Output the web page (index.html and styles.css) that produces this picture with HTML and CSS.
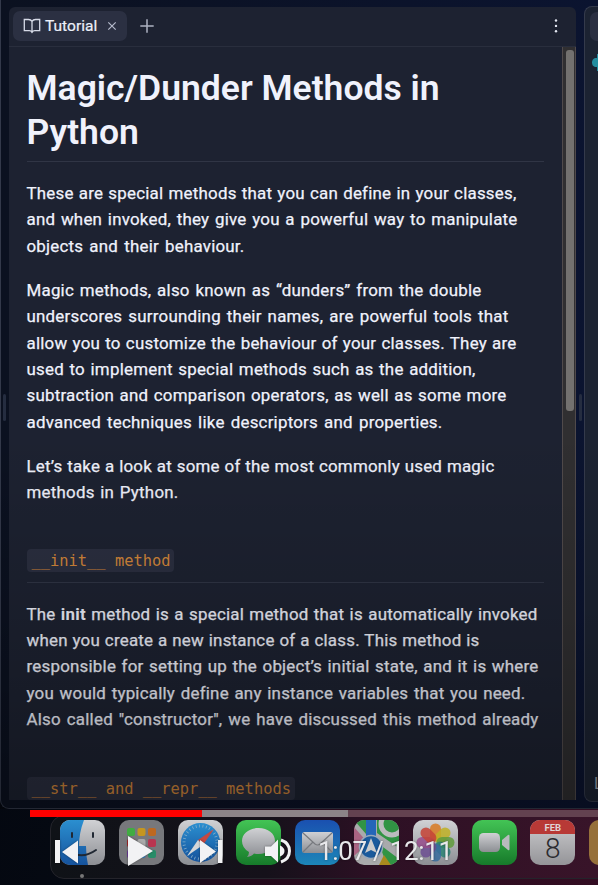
FILE: index.html
```html
<!DOCTYPE html>
<html lang="en">
<head>
<meta charset="utf-8">
<title>Tutorial</title>
<link rel="stylesheet" href="styles.css">
</head>
<body>
<div class="screen">
  <div class="window">
    <i class="grip grip-left"></i>
    <main class="panel">
      <header class="tabs">
        <div class="tab">
          <svg class="book" width="18" height="16" viewBox="0 0 18 16"><path d="M9 3.4C8.2 2 6.8 1.5 5.5 1.5H1.3v11.2h5c1.2 0 2 .4 2.7 1.6.7-1.2 1.500-1.600 2.700-1.600h5V1.500h-4.200C11.200 1.500 9.800 2 9 3.400zV14"/></svg>
          <span>Tutorial</span>
          <svg class="close" width="10" height="10" viewBox="0 0 10 10"><path d="M1.300 1.300l7.400 7.400M8.700 1.300L1.300 8.700"/></svg>
        </div>
        <svg class="plus" width="14" height="14" viewBox="0 0 14 14"><path d="M7 .3v13.400M.3 7h13.400"/></svg>
        <svg class="more" width="4" height="16" viewBox="0 0 4 16"><circle cx="2" cy="2.500" r="1.200"/><circle cx="2" cy="7.900" r="1.200"/><circle cx="2" cy="13.300" r="1.200"/></svg>
      </header>
      <div class="body">
        <article>
          <h1><span class="w412">Magic/Dunder Methods in</span> <span class="w112">Python</span></h1>
          <p><span class="w490">These are special methods that you can define in your classes,</span>
          <span class="w491">and when invoked, they give you a powerful way to manipulate</span>
          <span class="w218">objects and their behaviour.</span></p>
          <p><span class="w455">Magic methods, also known as “dunders” from the double</span>
          <span class="w482">underscores surrounding their names, are powerful tools that</span>
          <span class="w490">allow you to customize the behaviour of your classes. They are</span>
          <span class="w449">used to implement special methods such as the addition,</span>
          <span class="w480">subtraction and comparison operators, as well as some more</span>
          <span class="w416">advanced techniques like descriptors and properties.</span></p>
          <p><span class="w468">Let’s take a look at some of the most commonly used magic</span>
          <span class="w152">methods in Python.</span></p>
          <h2><code>__init__ method</code></h2>
          <p><span class="w511">The <b>init</b> method is a special method that is automatically invoked</span>
          <span class="w453">when you create a new instance of a class. This method is</span>
          <span class="w512">responsible for setting up the object’s initial state, and it is where</span>
          <span class="w499">you would typically define any instance variables that you need.</span>
          <span class="w512">Also called "constructor", we have discussed this method already</span></p>
          <h2 class="last"><code>__str__ and __repr__ methods</code></h2>
        </article>
        <div class="scrollbar"><i></i></div>
      </div>
    </main>
    <i class="grip grip-right"></i>
    <aside class="side">
      <div class="side-tab"></div>
      <svg class="python" width="12" height="17" viewBox="0 0 12 17"><path d="M5 0h7v17H5v-4H3Q0 12 0 8.500T3 4h2z"/></svg>
      <span class="side-label">L</span>
    </aside>
  </div>
  <div class="progress"><i class="played"></i><i class="loaded"></i></div>
  <div class="dock">
    <svg viewBox="0 0 45 45"><defs><linearGradient id="blue" x2="0" y2="1"><stop stop-color="#2b8fd0"/><stop offset="1" stop-color="#15529c"/></linearGradient><linearGradient id="sky" x2="0" y2="1"><stop stop-color="#1a50b0"/><stop offset="1" stop-color="#1c86b8"/></linearGradient><linearGradient id="green" x2="0" y2="1"><stop stop-color="#43c455"/><stop offset="1" stop-color="#167a2a"/></linearGradient><linearGradient id="white" x2="0" y2="1"><stop stop-color="#d0d1d4"/><stop offset="1" stop-color="#8c8e93"/></linearGradient><clipPath id="tile"><rect width="45" height="45" rx="10"/></clipPath></defs>
      <g clip-path="url(#tile)"><path fill="url(#white)" d="M0 0h45v45H0z"/><path fill="url(#blue)" d="M0 0h24q-5 13-5 26h7q0 10 2 19H0z"/><path class="smile" d="M12 13v4M33 13v4M9 31q13 9 27-1"/></g></svg>
    <svg viewBox="0 0 45 45"><rect width="45" height="45" rx="10" fill="#77787c"/><g><rect x="8" y="8" width="8" height="8" rx="2" fill="#40ac42"/><rect x="18.500" y="8" width="8" height="8" rx="2" fill="#c59620"/><rect x="29" y="8" width="8" height="8" rx="2" fill="#bd6820"/><rect x="8" y="19" width="8" height="8" rx="2" fill="#a52525"/><rect x="18.500" y="19" width="8" height="8" rx="2" fill="#aaa"/><rect x="29" y="19" width="8" height="8" rx="2" fill="#b93450"/><rect x="8" y="30" width="8" height="8" rx="2" fill="#6c3a99"/><rect x="18.500" y="30" width="8" height="8" rx="2" fill="#347bb5"/><rect x="29" y="30" width="8" height="8" rx="2" fill="#288c68"/></g></svg>
    <svg viewBox="0 0 45 45"><rect width="45" height="45" rx="10" fill="url(#white)"/><circle cx="22.500" cy="22.500" r="19.500" fill="url(#blue)"/><circle class="ticks" cx="22.500" cy="22.500" r="16.500"/><path fill="#c64842" d="M36 9L25 25l-5-5z"/><path fill="#d5d6d8" d="M9 36l11-16 5 5z"/></svg>
    <svg viewBox="0 0 45 45"><rect width="45" height="45" rx="10" fill="url(#green)"/><path fill="url(#white)" d="M22.500 8C13 8 6 13.500 6 21q0 7 7 11 0 3-2 5 5-1 7-3.500 2 .5 4.500.5C32 34 39 28.500 39 21S32 8 22.500 8z"/></svg>
    <svg viewBox="0 0 45 45"><rect width="45" height="45" rx="10" fill="url(#sky)"/><rect x="7" y="12" width="31" height="21" rx="2.500" fill="url(#white)"/><path class="flap" d="M8 13l12 11q2.500 2 5 0l12-11M8 32l10-10M37 32L27 22"/></svg>
    <svg viewBox="0 0 45 45"><g clip-path="url(#tile)"><path fill="#a9aaac" d="M0 0h45v45H0z"/><path fill="#a96482" d="M0 7l14 16L0 36z"/><path fill="#319444" d="M0 0h12v14zM23 0h22v28L23 13zM25 24l20 15v6H33z"/><path fill="#2466b9" d="M12 0h10v20H12z"/><circle cx="38" cy="4" r="11" fill="none" stroke="#bcbcbe" stroke-width="5"/><path fill="#a98a1e" d="M25 45l5-10 7 10z"/><circle cx="17" cy="27" r="11.500" fill="#1a5a9c" stroke="#98a8ba" stroke-width="1.500"/><path fill="#ccc" d="M17 18l6 15-6-3-6 3z"/></g></svg>
    <svg viewBox="0 0 45 45"><rect width="45" height="45" rx="10" fill="url(#white)"/><g class="petals" transform="translate(22.500 22.500)"><rect x="-5.500" y="-19" width="11" height="18" rx="5.500" fill="#d97c24"/><rect x="-5.500" y="-19" width="11" height="18" rx="5.500" fill="#bfb125" transform="rotate(45)"/><rect x="-5.500" y="-19" width="11" height="18" rx="5.500" fill="#5f9b3b" transform="rotate(90)"/><rect x="-5.500" y="-19" width="11" height="18" rx="5.500" fill="#2c8476" transform="rotate(135)"/><rect x="-5.500" y="-19" width="11" height="18" rx="5.500" fill="#386c9d" transform="rotate(180)"/><rect x="-5.500" y="-19" width="11" height="18" rx="5.500" fill="#6c4f92" transform="rotate(225)"/><rect x="-5.500" y="-19" width="11" height="18" rx="5.500" fill="#964d8c" transform="rotate(270)"/><rect x="-5.500" y="-19" width="11" height="18" rx="5.500" fill="#c54437" transform="rotate(315)"/></g></svg>
    <svg viewBox="0 0 45 45"><rect width="45" height="45" rx="10" fill="url(#green)"/><rect x="7" y="13" width="21" height="19" rx="4.500" fill="url(#white)"/><path fill="#b9bbbd" d="M30 20l6-5q1.500-1 1.500 1v13q0 2-1.500 1l-6-5z"/></svg>
    <div class="calendar"><b>FEB</b><span>8</span></div>
    <div class="notes"></div>
    <i class="running"></i>
    <div class="controls">
      <svg width="27" height="30" viewBox="0 0 27 30"><path d="M1 4h5v23H1zM24 4.500v23L8 16z"/></svg>
      <svg class="play" width="27" height="32" viewBox="0 0 27 32"><path d="M1 1v30l25-15z"/></svg>
      <svg class="next" width="25" height="25" viewBox="0 0 25 25"><path d="M1 1v23l16-11.500zM19 1h4.500v23H19z"/></svg>
      <svg class="volume" width="28" height="28" viewBox="0 0 28 28"><path d="M1 9.500h6l7-7v23l-7-6.500H1zM16 8.500q4.500 2 4.500 5.500T16 19.500z"/><path class="wave" d="M17 3q8.500 3 8.500 11T17 25"/></svg>
      <span class="time">1:07 / 12:11</span>
    </div>
  </div>
  <div class="shade"></div>
</div>
</body>
</html>
```

FILE: styles.css
```css
* { box-sizing: border-box; }
body { margin: 0; font-family: Roboto, "Liberation Sans", sans-serif; }
svg { display: block; flex: none; }
.screen { position: relative; width: 598px; height: 885px; overflow: hidden; background: linear-gradient(100deg, #02060e 0, #060a13 35%, #230a1b 52%, #330d22 100%); }
.window { position: relative; display: flex; height: 809px; padding: 7px 0 8px 9px; background: linear-gradient(90deg, #0b1120, #0b1430); border: solid #33394a; border-width: 0 0 1px 1px; border-radius: 0 0 0 9px; }
.panel { width: 567px; flex: none; margin-left: -1px; background: #1d2231; border-radius: 6px 6px 0 0; }
.tabs { display: flex; align-items: center; height: 40px; padding: 0 18px 1px 4px; border-bottom: 1px solid #292e3d; }
.tab { display: flex; align-items: center; width: 114px; height: 30px; padding-left: 10px; border-radius: 7px; background: #2b3042; color: #edf0fa; font-size: 15.500px; -webkit-text-stroke: .2px; }
.tab span { width: 53px; margin-left: 4px; letter-spacing: .02px; }
.book { fill: none; stroke: #d6dae7; stroke-width: 1.300; }
.close { margin-left: 9px; fill: none; stroke: #b5bacb; stroke-width: 1.200; }
.plus { margin-left: 13px; fill: none; stroke: #adb2c1; stroke-width: 1.500; }
.more { margin-left: auto; fill: #e4e8f2; }
.body { display: flex; height: 753px; }
article { width: 553px; padding: 19px 18px 0 17.500px; overflow: hidden; color: #f0f2fc; }
h1 { height: 96px; margin: 0 0 18px; border-bottom: 1px solid #303545; font-size: 35.500px; line-height: 44px; font-weight: 600; }
h1 span, p span { display: block; white-space: nowrap; text-align-last: justify; }
p { margin: 0 0 17.600px; font-size: 16.900px; line-height: 26.400px; font-weight: 400; letter-spacing: .23px; -webkit-text-stroke: .25px; }
p b { font-weight: 700; -webkit-text-stroke: 0; }
h2 { height: 34px; margin: 43px 0 18px; border-bottom: 1px solid #303545; font-weight: 400; }
h2 code { display: block; width: 147px; height: 23px; padding-left: 5px; border-radius: 4px; background: #2b2f40; color: #d4873a; font: 15.400px/24px "DejaVu Sans Mono", monospace; white-space: nowrap; }
h2.last { margin: 44px 0 0; border: 0; }
h2.last code { width: 268px; }
.w412 { width: 412px; } .w112 { width: 112px; }
.w490 { width: 490px; } .w491 { width: 491px; } .w218 { width: 218px; }
.w455 { width: 455px; } .w482 { width: 482px; } .w449 { width: 449px; }
.w480 { width: 480px; } .w416 { width: 416px; } .w468 { width: 468px; }
.w152 { width: 152px; } .w511 { width: 511px; } .w453 { width: 453px; }
.w512 { width: 512px; } .w499 { width: 499px; }
.scrollbar { width: 14px; padding: 3px 2px 0 3px; background: #302f31; border-left: 1px solid #504a4b; border-right: 1px solid #504a4b; }
.scrollbar i { display: block; width: 8px; height: 361px; border-radius: 3px; background: #73716f; }
.grip { position: absolute; top: 394px; width: 3px; height: 27px; border-radius: 2px; background: #252d40; }
.grip-left { left: 2px; }
.grip-right { left: 578px; }
.side { width: 20px; flex: none; margin: -1px 0 0 8px; border: 1px solid #343a4b; border-radius: 8px; border-right: 0; border-top-right-radius: 0; border-bottom-right-radius: 0; background: #1c2332; height: 796px; padding: 5px 0 0 5px; overflow: hidden; }
.side-tab { height: 29px; width: 20px; border-radius: 7px; background: #2b3042; }
.python { margin: 13px 0 0 2px; fill: #248d9f; }
.side-label { display: block; margin: 703px 0 0 4px; color: #a0a5b1; font-size: 16px; line-height: 20px; }
.progress { position: relative; z-index: 3; display: flex; height: 7px; margin: 1px 0 0 30px; background: #634250; }
.played { width: 172px; background: #f00; }
.loaded { width: 146px; background: #8c8488; }
.dock { position: relative; display: flex; gap: 13.800px; width: 600px; height: 64px; margin: -2px 0 0 50px; padding: 4px 0 0 10px; border: 1px solid #24242b; border-radius: 14px 0 0 14px; background: linear-gradient(90deg, #0f1217, #15111a 36%, #2d1024 54%, #3b152a); }
.dock > svg { width: 45px; height: 45px; margin-left: -1px; margin-right: 1px; }
.smile { fill: none; stroke: #202833; stroke-width: 2; stroke-linecap: round; }
.ticks { fill: none; stroke: #83acc9; stroke-width: 3; stroke-dasharray: .8 2.650; }
.flap { fill: none; stroke: #77797e; stroke-width: 1.200; }
.petals rect { opacity: .86; }
.calendar { width: 45px; height: 45px; flex: none; margin: 0 1px 0 -1px; border-radius: 10px; overflow: hidden; background: linear-gradient(#ceced0, #949498); text-align: center; }
.calendar b { display: block; height: 14px; background: #b83936; color: #e0d4d5; font-size: 9.500px; line-height: 16px; }
.calendar span { display: block; color: #2b2b2f; font-size: 28px; line-height: 29px; font-weight: 300; }
.notes { width: 45px; height: 45px; flex: none; margin-left: -1px; border-radius: 10px; background: #96703a; }
.running { position: absolute; left: 29px; top: 58px; width: 4px; height: 4px; border-radius: 50%; background: #777; }
.controls { position: absolute; z-index: 4; left: 3px; top: 19px; display: flex; align-items: center; height: 32px; color: #e8e8eb; fill: #f2f2f4; filter: drop-shadow(0 0 1px #0006); }
.play { margin-left: 46px; }
.next { margin: 1px 0 0 45px; }
.volume { margin-left: 40px; }
.wave { fill: none; stroke: #f2f2f4; stroke-width: 3; }
.time { margin-left: 26px; font-size: 26px; line-height: 32px; white-space: nowrap; letter-spacing: -.3px; }
.shade { position: absolute; inset: 430px 0 76px 0; background: linear-gradient(#0000, #00000028 48%, #0006); opacity: .8; pointer-events: none; }
```
